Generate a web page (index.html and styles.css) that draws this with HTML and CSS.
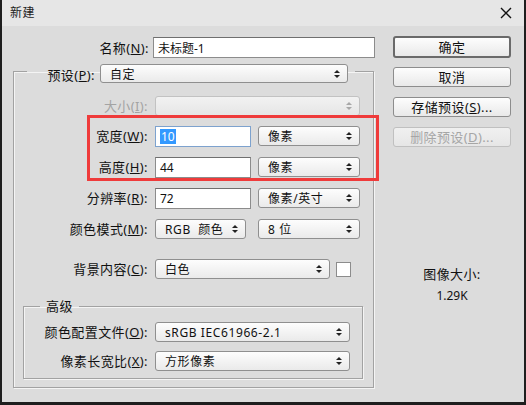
FILE: index.html
```html
<!DOCTYPE html>
<html lang="zh-CN">
  <head>
    <meta charset="UTF-8" />
    <title>新建</title>
    <link rel="stylesheet" href="styles.css">
  </head>
  <body>
    <div class="window">
      <div class="titlebar">
        <span class="title">新建</span>
        <svg class="close" width="12" height="12" viewBox="0 0 12 12">
          <path d="M1 1 L11 11 M11 1 L1 11" stroke="#111" stroke-width="1.4" fill="none" />
        </svg>
      </div>

      <div class="content">
        <div class="main">
          <div class="name-row">
            <label class="label name-label">名称(<u>N</u>):</label>
            <div class="field name-field">未标题-1</div>
          </div>

          <fieldset class="group">
            <legend class="preset">
              <label class="label preset-label">预设(<u>P</u>):</label>
              <div class="select preset-select">自定<span class="arrows"></span></div>
            </legend>

            <div class="row size-row">
              <label class="label disabled">大小(<u>I</u>):</label>
              <div class="select size-select disabled-select"><span class="arrows"></span></div>
            </div>

            <div class="row gap-10">
              <label class="label">宽度(<u>W</u>):</label>
              <div class="field num-field focused"><span class="selected">10</span></div>
              <div class="select unit-select">像素<span class="arrows"></span></div>
            </div>

            <div class="row gap-11">
              <label class="label">高度(<u>H</u>):</label>
              <div class="field num-field">44</div>
              <div class="select unit-select">像素<span class="arrows"></span></div>
            </div>

            <div class="row gap-11">
              <label class="label">分辨率(<u>R</u>):</label>
              <div class="field num-field">72</div>
              <div class="select unit-select">像素/英寸<span class="arrows"></span></div>
            </div>

            <div class="row gap-11">
              <label class="label">颜色模式(<u>M</u>):</label>
              <div class="select mode-select">RGB&nbsp; 颜色<span class="arrows"></span></div>
              <div class="select unit-select wide-gap">8 位<span class="arrows"></span></div>
            </div>

            <div class="row gap-20">
              <label class="label">背景内容(<u>C</u>):</label>
              <div class="select bg-select">白色<span class="arrows"></span></div>
              <div class="swatch"></div>
            </div>

            <fieldset class="advanced">
              <legend class="advanced-title">高级</legend>
              <div class="row adv-row first">
                <label class="label adv-label">颜色配置文件(<u>O</u>):</label>
                <div class="select adv-select">sRGB IEC61966-2.1<span class="arrows"></span></div>
              </div>
              <div class="row adv-row second">
                <label class="label adv-label">像素长宽比(<u>X</u>):</label>
                <div class="select adv-select">方形像素<span class="arrows"></span></div>
              </div>
            </fieldset>
          </fieldset>
        </div>

        <div class="side">
          <div class="button default">确定</div>
          <div class="button">取消</div>
          <div class="button">存储预设(<u>S</u>)...</div>
          <div class="button disabled-button">删除预设(<u>D</u>)...</div>
          <div class="image-size">
            <div class="image-size-title">图像大小:</div>
            <div class="image-size-value">1.29K</div>
          </div>
        </div>
      </div>

      <div class="highlight"></div>
    </div>
  </body>
</html>
```

FILE: styles.css
```css
* {
  box-sizing: border-box;
}
body {
  margin: 0;
  background-color: #1e1e1e;
  font-family: "Noto Sans", "Noto Sans CJK SC", sans-serif;
  color: #111;
}
.window {
  position: relative;
  width: 526px;
  height: 405px;
  background-color: #dcdcdc;
  border: 2px solid #1e1e1e;
  border-top: 0;
  border-bottom-width: 3px;
}
.titlebar {
  height: 26px;
  display: flex;
  align-items: center;
  justify-content: space-between;
  padding: 0 12px 0 8px;
  background-color: #e6e6e6;
  font-size: 12px;
}
.title {
  color: #222;
  line-height: 16px;
  letter-spacing: 0.5px;
}
.content {
  display: flex;
  padding: 11px 0 0 11px;
}
.main {
  width: 361px;
}
.label {
  font-size: 13px;
  line-height: 16px;
  letter-spacing: 0.4px;
  text-align: right;
  white-space: nowrap;
}
.label u,
.button u {
  text-underline-offset: 1px;
}
.disabled {
  color: #a3a3a3;
}

/* name row */
.name-row {
  display: flex;
  align-items: center;
  width: 362px;
}
.name-label {
  width: 136px;
  margin-right: 4px;
}
.field {
  height: 21px;
  display: flex;
  align-items: center;
  padding-left: 4px;
  background-color: #ffffff;
  border: 1px solid #8c8c8c;
  border-top-color: #6f6f6f;
  font-size: 12px;
}
.name-field {
  width: 222px;
}
.num-field {
  width: 96px;
}
.focused {
  border-color: #7da2ce;
}
.selected {
  background-color: #3399ff;
  color: #ffffff;
  line-height: 15px;
  padding: 0 1px;
}

/* selects */
.select {
  height: 20px;
  display: flex;
  align-items: center;
  padding: 0 7px 0 9px;
  background: linear-gradient(#fdfdfd, #eaeaea);
  border: 1px solid #8f8f8f;
  border-radius: 3px;
  font-size: 12px;
  letter-spacing: 0.6px;
  white-space: nowrap;
}
.arrows {
  margin-left: auto;
  display: flex;
  flex-direction: column;
  gap: 2px;
}
.arrows::before,
.arrows::after {
  content: "";
  border-left: 3px solid transparent;
  border-right: 3px solid transparent;
}
.arrows::before {
  border-bottom: 3px solid #222;
}
.arrows::after {
  border-top: 3px solid #222;
}
.disabled-select {
  background: linear-gradient(#f2f2f2, #e6e6e6);
  border-color: #c2c2c2;
}
.disabled-select .arrows::before {
  border-bottom-color: #a8a8a8;
}
.disabled-select .arrows::after {
  border-top-color: #a8a8a8;
}

/* preset group */
.group {
  margin: 2px 0 0;
  padding: 0 0 8px;
  border: 1px solid #a2a2a2;
  box-shadow: inset 1px 1px 0 #f4f4f4, 1px 1px 0 #f4f4f4;
}
.preset {
  display: flex;
  align-items: flex-end;
  height: 23px;
  margin-left: 13px;
  padding: 0 7px 0 0;
}
.preset-label {
  width: 68px;
  margin-right: 5px;
}
.preset-select {
  width: 248px;
  height: 19px;
}
.row {
  display: flex;
  align-items: center;
  height: 20px;
}
.row .label {
  width: 134px;
  margin-right: 7px;
}
.size-row {
  margin-top: 13px;
}
.gap-10 {
  margin-top: 10px;
}
.gap-11 {
  margin-top: 11px;
}
.gap-20 {
  margin-top: 20px;
}
.size-select {
  width: 205px;
}
.unit-select {
  width: 102px;
  margin-left: 7px;
}
.wide-gap {
  margin-left: 12px;
}
.mode-select {
  width: 91px;
}
.bg-select {
  width: 175px;
}
.swatch {
  width: 15px;
  height: 15px;
  margin-left: 6px;
  background-color: #ffffff;
  border: 1px solid #8c8c8c;
}

/* advanced group */
.advanced {
  margin: 19px 10px 0 9px;
  padding: 0 0 7px;
  border: 1px solid #a2a2a2;
  box-shadow: inset 1px 1px 0 #f4f4f4, 1px 1px 0 #f4f4f4;
}
.advanced-title {
  margin-left: 16px;
  padding: 0 6px;
  font-size: 13px;
  line-height: 16px;
  letter-spacing: 0.4px;
}
.row .adv-label {
  width: 124px;
}
.adv-row.first {
  margin-top: 8px;
}
.adv-row.second {
  margin-top: 9px;
}
.adv-select {
  width: 195px;
}

/* side buttons */
.side {
  width: 118px;
  margin-left: 19px;
}
.button {
  height: 20px;
  display: flex;
  align-items: center;
  justify-content: center;
  margin-top: 10px;
  background: linear-gradient(#fdfdfd, #e9e9e9);
  border: 1px solid #8d8d8d;
  border-radius: 3px;
  font-size: 13px;
  line-height: 16px;
  letter-spacing: 0.4px;
}
.button.default {
  height: 22px;
  margin-top: -1px;
  border: 2px solid #6a6a6a;
}
.button.default + .button {
  margin-top: 9px;
}
.disabled-button {
  color: #a6a6a6;
  border-color: #c0c0c0;
  background: linear-gradient(#f0f0f0, #e6e6e6);
}
.image-size {
  margin-top: 119px;
  text-align: center;
  line-height: 16px;
}
.image-size-title {
  font-size: 13px;
  letter-spacing: 0.4px;
}
.image-size-value {
  margin-top: 6px;
  font-size: 12px;
}

/* red annotation box drawn over the form */
.highlight {
  position: absolute;
  left: 85px;
  top: 115px;
  width: 292px;
  height: 66px;
  border: 3px solid #ef3b3b;
}
```
